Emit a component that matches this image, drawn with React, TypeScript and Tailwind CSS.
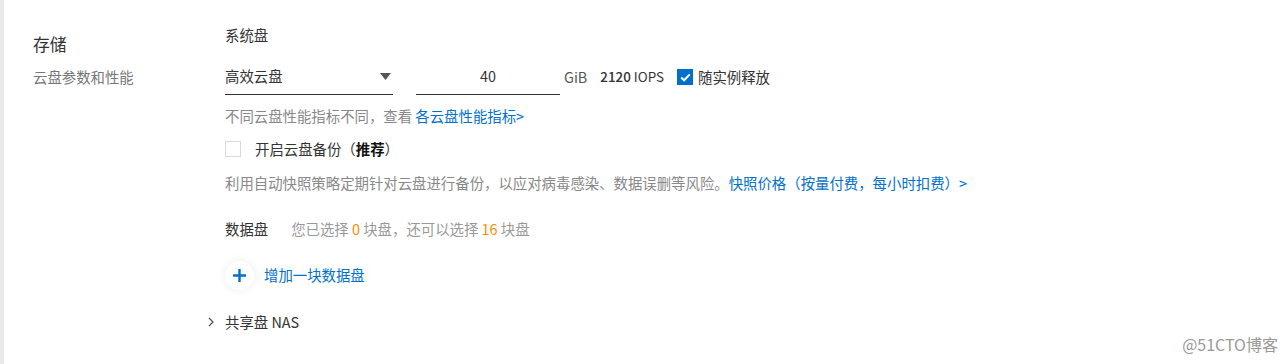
import React from 'react'

const font = { fontFamily: '"Noto Sans CJK SC", "Noto Sans", sans-serif' }

function CheckBox({ checked }: { checked?: boolean }) {
  if (checked) {
    return (
      <span className="flex h-[16px] w-[16px] items-center justify-center bg-[#0070cc]">
        <svg width="11" height="9" viewBox="0 0 11 9" fill="none">
          <path d="M1.2 4.6 L4.1 7.3 L9.8 1.4" stroke="white" strokeWidth="2" />
        </svg>
      </span>
    )
  }
  return <span className="block h-[16px] w-[16px] border border-[#d9d9d9] bg-white" />
}

export default function App() {
  return (
    <div className="relative flex h-[364px] w-[1288px] bg-white text-[14.4px] text-[#333]" style={font}>
      <div className="w-[4px] shrink-0 bg-[#e9e9ec]" />

      {/* left labels */}
      <div className="flex w-[221px] shrink-0 flex-col pl-[29px] pt-[33px]">
        <div className="flex h-[22px] items-center text-[16.8px] leading-none text-[#333]">存储</div>
        <div className="mt-[12px] flex h-[20px] items-center leading-none text-[#777]">云盘参数和性能</div>
      </div>

      {/* right content */}
      <div className="flex flex-col pt-[25px]">
        <div className="flex h-[20px] items-center leading-none text-[#333]">系统盘</div>

        <div className="mt-[14px] flex h-[36px] items-stretch">
          <div className="flex w-[168px] items-center justify-between border-b border-[#333] pr-[2px]">
            <span className="leading-none">高效云盘</span>
            <svg width="11" height="7" viewBox="0 0 11 7">
              <path d="M0 0 H11 L5.5 7 Z" fill="#555" />
            </svg>
          </div>
          <div className="ml-[23px] flex w-[144px] items-center justify-center border-b border-[#333] leading-none">
            40
          </div>
          <span className="ml-[4px] flex items-center leading-none text-[#555]">GiB</span>
          <span className="ml-[13px] flex items-center text-[13.4px] leading-none">
            <span className="font-medium">2120</span>
            <span className="ml-[3px]">IOPS</span>
          </span>
          <span className="ml-[13px] flex items-center gap-[5px] leading-none">
            <CheckBox checked />
            <span>随实例释放</span>
          </span>
        </div>

        <div className="mt-[11px] flex h-[20px] items-center leading-none text-[#888]">
          不同云盘性能指标不同，查看&nbsp;<span className="text-[#0070cc]">各云盘性能指标&gt;</span>
        </div>

        <div className="mt-[13px] flex h-[20px] items-center gap-[14px] leading-none">
          <CheckBox />
          <span>
            开启云盘备份（<span className="font-bold text-[#111]">推荐</span>）
          </span>
        </div>

        <div className="mt-[14px] flex h-[20px] items-center leading-none text-[#888]">
          利用自动快照策略定期针对云盘进行备份，以应对病毒感染、数据误删等风险。
          <span className="text-[#0070cc]">快照价格（按量付费，每小时扣费）&gt;</span>
        </div>

        <div className="mt-[26px] flex h-[20px] items-center leading-none">
          <span className="text-[#333]">数据盘</span>
          <span className="ml-[23px] text-[#999]">
            您已选择 <span className="text-[#ff8a00]">0</span> 块盘，还可以选择{' '}
            <span className="text-[#ff8a00]">16</span> 块盘
          </span>
        </div>

        <div className="mt-[21px] flex h-[30px] items-center gap-[10px] leading-none">
          <span className="flex h-[29px] w-[29px] items-center justify-center rounded-full bg-white shadow-[0_0_10px_rgba(0,0,0,0.08)]">
            <svg width="13" height="13" viewBox="0 0 13 13">
              <path d="M6.5 0 V13 M0 6.5 H13" stroke="#0070cc" strokeWidth="2.4" />
            </svg>
          </span>
          <span className="text-[#0070cc]">增加一块数据盘</span>
        </div>

        <div className="-ml-[18px] mt-[22px] flex h-[20px] items-center gap-[10px] leading-none">
          <svg width="8" height="10" viewBox="0 0 8 10" fill="none">
            <path d="M2 1 L6 5 L2 9" stroke="#555" strokeWidth="1.3" />
          </svg>
          <span>共享盘 NAS</span>
        </div>
      </div>

      <span className="absolute right-[10px] top-[336px] text-[16px] leading-none text-[#999]">@51CTO博客</span>
    </div>
  )
}
